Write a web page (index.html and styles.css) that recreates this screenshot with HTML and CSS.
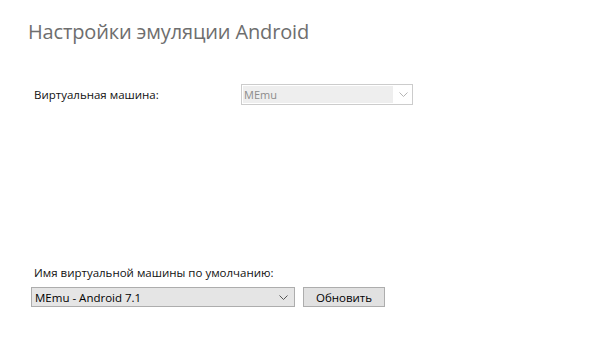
FILE: index.html
```html
<!DOCTYPE html>
<html lang="ru">
<head>
<meta charset="utf-8">
<link rel="stylesheet" href="styles.css">
</head>
<body>
<div class="page">
  <h1 class="title">Настройки эмуляции Android</h1>
  <div class="row vm-row">
    <span class="label">Виртуальная машина:</span>
    <div class="combo combo-disabled">
      <span class="combo-fill">MEmu</span>
      <svg class="chev" width="9" height="5" viewBox="0 0 9 5"><path d="M0.5 0.5 L4.5 4.5 L8.5 0.5" fill="none" stroke="#b5b5b5" stroke-width="1"/></svg>
    </div>
  </div>
  <div class="default-block">
    <div class="label">Имя виртуальной машины по умолчанию:</div>
    <div class="row ctrl-row">
      <div class="combo combo-main">
        <span class="combo-text">MEmu - Android 7.1</span>
        <svg class="chev" width="9" height="5" viewBox="0 0 9 5"><path d="M0.5 0.5 L4.5 4.5 L8.5 0.5" fill="none" stroke="#555" stroke-width="1"/></svg>
      </div>
      <button class="btn">Обновить</button>
    </div>
  </div>
</div>
</body>
</html>
```
FILE: styles.css
```css
html, body {
  margin: 0;
  padding: 0;
  background: #ffffff;
}
body {
  font-family: "Open Sans", "Noto Sans", sans-serif;
  width: 615px;
  height: 364px;
  overflow: hidden;
}
.page {
  display: flex;
  flex-direction: column;
}
.title {
  margin: 18px 0 0 28px;
  font-size: 20px;
  font-weight: 400;
  line-height: 28px;
  color: #6e6e6e;
  letter-spacing: -0.15px;
}
.label {
  font-size: 11.5px;
  color: #111;
  line-height: 16px;
}
.row {
  display: flex;
  align-items: center;
}
.vm-row {
  margin: 38px 0 0 34px;
}
.vm-row .label {
  width: 207px;
}
.combo {
  box-sizing: border-box;
  display: flex;
  align-items: center;
  border: 1px solid #adadad;
  background: #e5e5e5;
  font-size: 11.5px;
}
.combo-disabled {
  width: 172px;
  height: 21px;
  border-color: #cccccc;
  background: #ffffff;
  padding: 1px;
}
.combo-fill {
  flex: 0 0 150px;
  height: 17px;
  background: #eeeeee;
  color: #8c8c8c;
  line-height: 17px;
  padding-left: 1px;
  box-sizing: border-box;
  font-size: 11px;
}
.combo-disabled .chev {
  margin-left: 6px;
}
.default-block {
  margin: 160px 0 0 34px;
}
.ctrl-row {
  margin: 6px 0 0 -3px;
}
.combo-main {
  width: 264px;
  height: 20px;
  padding: 0 6px 0 3px;
  justify-content: space-between;
}
.combo-text {
  color: #000;
  font-size: 11.5px;
}
.btn {
  margin-left: 8px;
  box-sizing: border-box;
  width: 82px;
  height: 20px;
  border: 1px solid #adadad;
  background: #e1e1e1;
  font-family: inherit;
  font-size: 11.5px;
  color: #000;
  padding: 0;
}
```
